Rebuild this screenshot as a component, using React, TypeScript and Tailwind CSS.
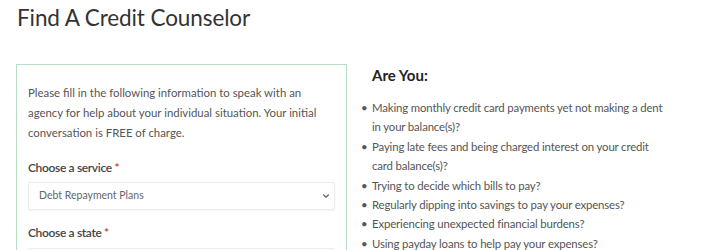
import React from "react";

const items: string[][] = [
  ["Making monthly credit card payments yet not making a dent", "in your balance(s)?"],
  ["Paying late fees and being charged interest on your credit", "card balance(s)?"],
  ["Trying to decide which bills to pay?"],
  ["Regularly dipping into savings to pay your expenses?"],
  ["Experiencing unexpected financial burdens?"],
  ["Using payday loans to help pay your expenses?"],
];

function Chevron() {
  return (
    <svg width="8" height="6" viewBox="0 0 8 6" className="shrink-0">
      <path d="M1.5 1.8 L4 4.2 L6.5 1.8" fill="none" stroke="#666" strokeWidth="1.2" strokeLinecap="round" strokeLinejoin="round" />
    </svg>
  );
}

export default function App() {
  return (
    <div className="w-[723px] h-[250px] overflow-hidden bg-white text-[#555]" style={{ fontFamily: "Lato, 'Open Sans', sans-serif" }}>
      <h1 className="pl-[17px] pt-[3px] text-[22.5px] leading-[30px] tracking-[-0.1px] text-[#333] font-normal">Find A Credit Counselor</h1>
      <div className="flex pl-[16px] mt-[31px]">
        <div className="w-[331px] shrink-0 border border-[#b8dcc4] px-[11px] pt-[18px]">
          <p className="text-[11.4px] leading-[20px] text-[#555] whitespace-nowrap">
            Please fill in the following information to speak with an
            <br />
            agency for help about your individual situation. Your initial
            <br />
            conversation is FREE of charge.
          </p>
          <label className="block mt-[15px] text-[12px] leading-[20px] tracking-[-0.35px] font-semibold text-[#444]">
            Choose a service <span className="text-[#c0392b]">*</span>
          </label>
          <div className="mt-[4px] h-[28px] border border-[#ececec] rounded-[2px] shadow-[0_1px_2px_rgba(0,0,0,0.05)] flex items-center justify-between pl-[10px] pr-[4px]">
            <span className="text-[10.5px] text-[#666]">Debt Repayment Plans</span>
            <Chevron />
          </div>
          <label className="block mt-[13px] text-[12px] leading-[20px] tracking-[-0.35px] font-semibold text-[#444]">
            Choose a state <span className="text-[#c0392b]">*</span>
          </label>
          <div className="mt-[5px] h-[28px] border border-[#ececec] rounded-[2px]" />
        </div>
        <div className="pl-[25px] pt-[1px]">
          <h3 className="text-[15px] leading-[20px] font-bold text-[#222]">Are You:</h3>
          <ul className="mt-[13px]">
            {items.map((lines) => (
              <li key={lines[0]} className="relative text-[11.4px] leading-[19.4px] tracking-[-0.15px] text-[#555] whitespace-nowrap">
                <span className="absolute left-[-11px] top-0">•</span>
                {lines.map((l, i) => (
                  <React.Fragment key={l}>
                    {i > 0 && <br />}
                    {l}
                  </React.Fragment>
                ))}
              </li>
            ))}
          </ul>
        </div>
      </div>
    </div>
  );
}
